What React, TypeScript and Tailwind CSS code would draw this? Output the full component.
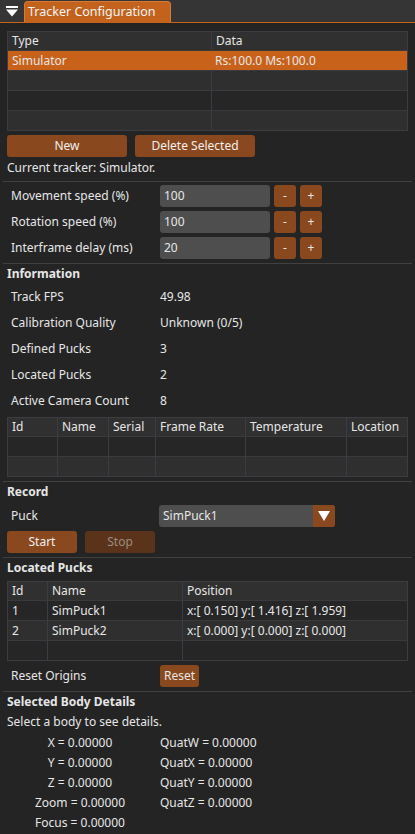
import React from 'react';

const FONT = "font-['Noto_Sans','Open_Sans',sans-serif]";

function Separator() {
  return <div className="-mx-[4px] h-px bg-[#404040]" />;
}

function Btn({ label, w, dim }: { label: string; w: string; dim?: boolean }) {
  return (
    <div
      className={`${w} h-[22px] rounded-[3px] flex items-center justify-center ${
        dim ? 'bg-[#5a331a] text-[#9c8c80]' : 'bg-[#8a481e] text-[#f0f0f0]'
      }`}
    >
      {label}
    </div>
  );
}

function SpeedRow({ label, value }: { label: string; value: string }) {
  return (
    <div className="flex items-center h-[22px]">
      <div className="w-[153px] pl-[4px]">{label}</div>
      <div className="w-[110px] h-[22px] rounded-[3px] bg-[#4e4e4e] flex items-center pl-[4px]">{value}</div>
      <div className="ml-[4px] w-[22px] h-[22px] rounded-[3px] bg-[#8a481e] flex items-center justify-center">-</div>
      <div className="ml-[4px] w-[22px] h-[22px] rounded-[3px] bg-[#8a481e] flex items-center justify-center">+</div>
    </div>
  );
}

function InfoRow({ label, value }: { label: string; value: string }) {
  return (
    <div className="flex items-center h-[26px]">
      <div className="w-[153px] pl-[4px]">{label}</div>
      <div>{value}</div>
    </div>
  );
}

function Table({
  cols,
  rows,
  selected,
}: {
  cols: { name: string; w: string }[];
  rows: string[][];
  selected?: number;
}) {
  return (
    <div className="border border-[#3c3c42]">
      <div className="flex h-[18px] bg-[#303030]">
        {cols.map((c, i) => (
          <div key={i} className={`${c.w} pl-[4px] flex items-center ${i > 0 ? 'border-l border-[#3c3c42]' : ''}`}>
            {c.name}
          </div>
        ))}
      </div>
      {rows.map((r, ri) => (
        <div
          key={ri}
          className={`flex h-[20px] border-t border-[#3a3a3e] ${
            ri === selected ? 'bg-[#c8621a]' : ri % 2 === 0 ? 'bg-[#262626]' : 'bg-[#2f2f2f]'
          }`}
        >
          {cols.map((c, i) => (
            <div
              key={i}
              className={`${c.w} pl-[4px] flex items-center whitespace-nowrap ${
                i > 0 && ri !== selected ? 'border-l border-[#3c3c42]' : ''
              }`}
            >
              {r[i] ?? ''}
            </div>
          ))}
        </div>
      ))}
    </div>
  );
}

export default function App() {
  return (
    <div className={`${FONT} w-[415px] h-[834px] overflow-hidden bg-[#242424] text-[#e6e6e6] text-[12px] leading-[16px]`}>
      {/* title bar */}
      <div className="h-[23px] bg-[#353535] border-b border-[#c8621a] flex items-end">
        <div className="w-[24px] h-[21px] flex items-center justify-center">
          <svg width="12" height="11" viewBox="0 0 12 11">
            <rect x="0" y="0" width="12" height="2" fill="#ffffff" />
            <path d="M0 3.5 H12 L6 10.5 Z" fill="#ffffff" />
          </svg>
        </div>
        <div className="w-[147px] h-[21px] bg-[#c2621c] rounded-t-[4px] border-t border-x border-[#d77a33] pl-[3px] flex items-center text-[12.5px] text-[#f4f4f4]">
          Tracker Configuration
        </div>
      </div>

      <div className="px-[7px] pt-[8px]">
        <Table
          cols={[
            { name: 'Type', w: 'w-[203px]' },
            { name: 'Data', w: 'flex-1' },
          ]}
          rows={[['Simulator', 'Rs:100.0 Ms:100.0'], [], [], []]}
          selected={0}
        />

        <div className="flex gap-[8px] mt-[4px]">
          <Btn label="New" w="w-[120px]" />
          <Btn label="Delete Selected" w="w-[120px]" />
        </div>
        <div className="mt-[3px] mb-[5px]">Current tracker: Simulator.</div>

        <Separator />

        <div className="flex flex-col gap-[4px] mt-[3px] mb-[4px]">
          <SpeedRow label="Movement speed (%)" value="100" />
          <SpeedRow label="Rotation speed (%)" value="100" />
          <SpeedRow label="Interframe delay (ms)" value="20" />
        </div>

        <Separator />

        <div className="font-bold mt-[2px]">Information</div>
        <div className="mt-[2px]">
          <InfoRow label="Track FPS" value="49.98" />
          <InfoRow label="Calibration Quality" value="Unknown (0/5)" />
          <InfoRow label="Defined Pucks" value="3" />
          <InfoRow label="Located Pucks" value="2" />
          <InfoRow label="Active Camera Count" value="8" />
        </div>

        <div className="mt-[3px]">
          <Table
            cols={[
              { name: 'Id', w: 'w-[49px]' },
              { name: 'Name', w: 'w-[51px]' },
              { name: 'Serial', w: 'w-[47px]' },
              { name: 'Frame Rate', w: 'w-[90px]' },
              { name: 'Temperature', w: 'w-[101px]' },
              { name: 'Location', w: 'flex-1' },
            ]}
            rows={[[], []]}
          />
        </div>

        <div className="mt-[4px]">
          <Separator />
        </div>

        <div className="font-bold mt-[2px]">Record</div>
        <div className="flex items-center mt-[5px] h-[22px]">
          <div className="w-[152px] pl-[4px]">Puck</div>
          <div className="w-[176px] h-[22px] rounded-[3px] bg-[#4e4e4e] flex items-center overflow-hidden">
            <div className="flex-1 pl-[4px]">SimPuck1</div>
            <div className="w-[22px] h-[22px] bg-[#8a481e] flex items-center justify-center">
              <svg width="12" height="10" viewBox="0 0 12 10">
                <path d="M0 0 H12 L6 10 Z" fill="#ffffff" />
              </svg>
            </div>
          </div>
        </div>
        <div className="flex gap-[8px] mt-[4px]">
          <Btn label="Start" w="w-[70px]" />
          <Btn label="Stop" w="w-[70px]" dim />
        </div>

        <div className="mt-[4px]">
          <Separator />
        </div>

        <div className="font-bold mt-[2px]">Located Pucks</div>
        <div className="mt-[5px]">
          <Table
            cols={[
              { name: 'Id', w: 'w-[39px]' },
              { name: 'Name', w: 'w-[135px]' },
              { name: 'Position', w: 'flex-1' },
            ]}
            rows={[
              ['1', 'SimPuck1', 'x:[ 0.150] y:[ 1.416] z:[ 1.959]'],
              ['2', 'SimPuck2', 'x:[ 0.000] y:[ 0.000] z:[ 0.000]'],
              [],
            ]}
          />
        </div>

        <div className="flex items-center mt-[4px] h-[22px]">
          <div className="w-[153px] pl-[4px]">Reset Origins</div>
          <div className="h-[22px] w-[39px] rounded-[3px] bg-[#8a481e] flex items-center justify-center">Reset</div>
        </div>

        <div className="mt-[4px]">
          <Separator />
        </div>

        <div className="font-bold mt-[2px]">Selected Body Details</div>
        <div className="mt-[4px]">Select a body to see details.</div>
        <div className="grid grid-cols-[146px_1fr] mt-[3px] leading-[20px]">
          <div className="text-center">X = 0.00000</div>
          <div className="pl-[7px]">QuatW = 0.00000</div>
          <div className="text-center">Y = 0.00000</div>
          <div className="pl-[7px]">QuatX = 0.00000</div>
          <div className="text-center">Z = 0.00000</div>
          <div className="pl-[7px]">QuatY = 0.00000</div>
          <div className="text-center">Zoom = 0.00000</div>
          <div className="pl-[7px]">QuatZ = 0.00000</div>
          <div className="text-center">Focus = 0.00000</div>
          <div />
        </div>
      </div>
    </div>
  );
}
